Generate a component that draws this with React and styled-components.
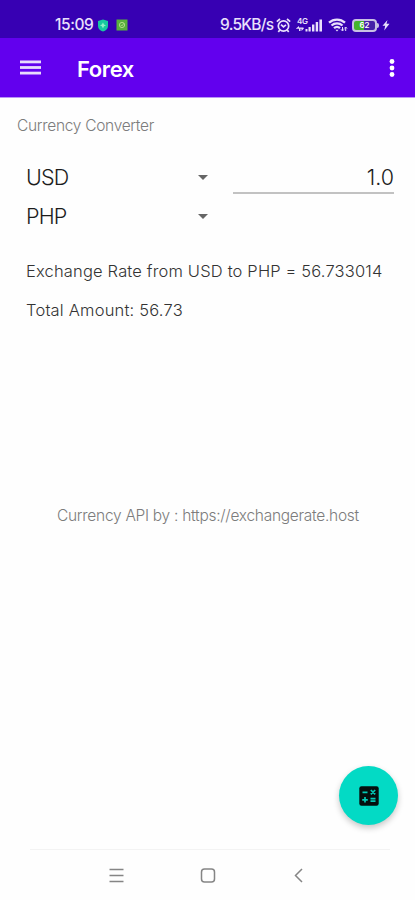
import React, { useState } from 'react';
import styled, { createGlobalStyle } from 'styled-components';

const GlobalStyle = createGlobalStyle`
  * {
    box-sizing: border-box;
  }

  body {
    margin: 0;
    background: #fefefe;
    font-family: Inter, 'Noto Sans', sans-serif;
  }

  svg {
    display: block;
    flex: none;
  }
`;

const Screen = styled.div`
  display: flex;
  flex-direction: column;
  width: 415px;
  height: 900px;
  overflow: hidden;
  background: #fefefe;
`;

const StatusBar = styled.div`
  display: flex;
  align-items: center;
  height: 38px;
  padding: 12px 25px 0 55px;
  background: #3700b3;
  color: #e9e0fb;
`;

const StatusText = styled.span`
  width: ${(props) => props.$width}px;
  font-size: 15.5px;
  font-weight: 500;
  line-height: 20px;
  letter-spacing: ${(props) => props.$spacing}px;
  white-space: nowrap;
`;

const StatusGroup = styled.div`
  display: flex;
  align-items: center;
  gap: ${(props) => props.$gap || 0}px;
`;

const StatusEnd = styled(StatusGroup)`
  margin-left: auto;
`;

const AppBar = styled.header`
  display: flex;
  align-items: center;
  height: 60px;
  padding: 1px 19px 0 20px;
  border-bottom: 1px solid #b794f6;
  background: #6200ee;
  color: #fff;
`;

const IconButton = styled.button`
  display: flex;
  padding: 0;
  border: 0;
  background: none;
  color: inherit;
`;

const Title = styled.h1`
  flex: 1;
  margin: 1px 0 0 36px;
  font-size: 22px;
  font-weight: 600;
  line-height: 30px;
  letter-spacing: -0.4px;
`;

const Content = styled.main`
  display: flex;
  flex: 1;
  flex-direction: column;
  padding: 18px 21px 0 17px;
`;

const Caption = styled.div`
  color: #7c7c7c;
  font-size: 15.5px;
  font-weight: 300;
  line-height: 20px;
  letter-spacing: ${(props) => props.$spacing}px;
  white-space: nowrap;
`;

const Form = styled.div`
  display: grid;
  grid-template-columns: 184px 161px;
  grid-template-rows: 39px 39px;
  column-gap: 23px;
  margin: 22px 0 0 9px;
`;

const Spinner = styled.div`
  display: flex;
  align-items: center;
  justify-content: space-between;
  grid-column: 1;
  color: #1c1c1c;
  font-size: 21.5px;
  font-weight: 300;
  line-height: 39px;
  letter-spacing: -0.8px;
`;

const Caret = styled.i`
  margin-right: 2px;
  border: 5px solid transparent;
  border-top: 5px solid #666;
  border-bottom: 0;
`;

const AmountInput = styled.input`
  grid-column: 2;
  grid-row: 1;
  width: 100%;
  height: 36px;
  padding: 3px 0 0;
  border: 0;
  border-bottom: 2px solid #c2c2c2;
  outline: 0;
  background: none;
  color: #1c1c1c;
  font-family: inherit;
  font-size: 21.5px;
  font-weight: 300;
  text-align: right;
`;

const Results = styled.div`
  display: flex;
  flex-direction: column;
  margin: 16px 0 0 9px;
`;

const Result = styled.div`
  color: #333;
  font-size: 16.5px;
  font-weight: 300;
  line-height: 39px;
  letter-spacing: ${(props) => props.$spacing}px;
  white-space: nowrap;
`;

const Credit = styled.div`
  margin: 176px 0 0 40px;
`;

const Fab = styled.button`
  display: flex;
  align-items: center;
  justify-content: center;
  align-self: flex-end;
  width: 59px;
  height: 59px;
  margin: auto -4px 24px 0;
  padding: 0;
  border: 0;
  border-radius: 50%;
  background: #03dac5;
  box-shadow: 0 3px 6px rgba(0, 0, 0, 0.22);
`;

const NavBar = styled.nav`
  display: flex;
  align-items: center;
  justify-content: space-between;
  height: 51px;
  margin: 0 25px 0 30px;
  padding: 2px 87px 0 79px;
  border-top: 1px solid #f3f3f3;
  color: #858585;
`;

const ShieldIcon = () => (
  <svg width="12" height="13" viewBox="0 0 12 13">
    <path d="M6 .5 11 2v5c0 2.800-2.200 4.600-5 5.600C3.200 11.600 1 9.800 1 7V2z" fill="#18c9a0" />
    <path d="M6 3.500 7 5.500 9 6.500 7 7.300 6 9.500 4.800 7.300 3 6.500 4.800 5.500z" fill="#8df0c6" />
  </svg>
);

const AppBadgeIcon = () => (
  <svg width="12" height="12" viewBox="0 0 12 12">
    <rect x=".5" y=".5" width="11" height="11" fill="#58b13d" />
    <circle cx="6" cy="6" r="2.600" fill="none" stroke="#b4dc8c" />
    <path d="m4.800 6 1 1 2.400-3" fill="none" stroke="#b4dc8c" strokeWidth=".8" />
  </svg>
);

const AlarmIcon = () => (
  <svg width="15" height="15" viewBox="0 0 15 15" fill="none" stroke="currentColor" strokeWidth="1.700">
    <circle cx="7.500" cy="8" r="5.200" />
    <path d="M.8 3.600 4 1M14.200 3.600 11 1M5 6.600l2.500 2.200L10 6.800" />
    <path d="m3.800 12-1.500 2M11.200 12l1.500 2" />
  </svg>
);

const Network = styled.div`
  position: relative;
`;

const NetworkType = styled.span`
  position: absolute;
  top: -1px;
  left: 1px;
  font-size: 8px;
  font-weight: 600;
  line-height: 8px;
  letter-spacing: -0.4px;
`;

const SignalIcon = () => (
  <svg width="27" height="14" viewBox="0 0 27 14" fill="currentColor">
    <path d="M0 10.500 3 8v1.600h4.500v1.200H4.500V13H3v-2.200H0zM8 10.200 5.500 13v-2.500z" />
    <rect x="9.500" y="11" width="2" height="2.500" />
    <rect x="12.500" y="9" width="2.200" height="4.500" />
    <rect x="16" y="6.500" width="2.400" height="7" />
    <rect x="19.700" y="4" width="2.400" height="9.500" />
    <rect x="23.400" y="1.500" width="2.600" height="12" />
  </svg>
);

const WifiIcon = () => (
  <svg width="20" height="14" viewBox="0 0 20 14" fill="none" stroke="currentColor" strokeWidth="2.300">
    <path d="M1 4.700a12 12 0 0 1 16 0M3.500 7.500a8.200 8.200 0 0 1 11 0M6 10.200a4.500 4.500 0 0 1 6 0" />
    <path d="M9 13.500 7.500 11.700h3z" fill="currentColor" stroke="none" />
    <path d="M14.500 9v3.500M13 11.300l1.500 1.700 1.500-1.700M17.700 13V9.500M16.200 10.500l1.500-1.500 1.300 1.500" strokeWidth="1" />
  </svg>
);

const Battery = styled.div`
  display: flex;
  align-items: center;
  justify-content: center;
  position: relative;
  width: 25px;
  height: 13px;
  margin-left: -1px;
  border: 2px solid #c8bfe4;
  border-radius: 4px;
  background: linear-gradient(90deg, #45b52c 50%, #4520a8 50%);
  color: #fff;
  font-size: 8px;
  font-weight: 600;
  line-height: 9px;

  &::after {
    content: '';
    position: absolute;
    right: -4px;
    width: 2px;
    height: 5px;
    border-radius: 0 2px 2px 0;
    background: #c8bfe4;
  }
`;

const BoltIcon = () => (
  <svg width="8" height="12" viewBox="0 0 8 12">
    <path d="M5.500 1 .5 6.800h2.700L2.200 11.500l5.300-6.700H4.500z" fill="currentColor" />
  </svg>
);

const MenuIcon = () => (
  <svg width="21" height="16" viewBox="0 0 21 16" fill="#e8dafc">
    <rect y=".5" width="21" height="2.800" />
    <rect y="6.100" width="21" height="2.800" />
    <rect y="11.700" width="21" height="2.800" />
  </svg>
);

const MoreIcon = () => (
  <svg width="8" height="20" viewBox="0 0 8 20" fill="currentColor">
    <circle cx="4" cy="3.500" r="2.400" />
    <circle cx="4" cy="10" r="2.400" />
    <circle cx="4" cy="16.500" r="2.400" />
  </svg>
);

const CalculatorIcon = () => (
  <svg width="20" height="20" viewBox="0 0 20 20">
    <rect x=".3" y=".3" width="19.400" height="19.400" rx="2.200" fill="#050f0e" />
    <g stroke="#03c9b6" strokeWidth="1.700" fill="none">
      <path d="M3.500 6.300h5M3.200 13.800h5.600M6 11v5.600M11.500 12.700h5M11.500 15.200h5M11.800 4l4.400 4.400M16.200 4l-4.400 4.400" />
    </g>
  </svg>
);

const RecentsIcon = () => (
  <svg width="15" height="16" viewBox="0 0 15 16" fill="none" stroke="currentColor" strokeWidth="1.500">
    <path d="M.5 1.500h14M.5 7.500h14M.5 13.500h14" />
  </svg>
);

const HomeIcon = () => (
  <svg width="16" height="16" viewBox="0 0 16 16" fill="none" stroke="currentColor" strokeWidth="1.500">
    <rect x="1.500" y="1" width="13" height="13" rx="3" />
  </svg>
);

const BackIcon = () => (
  <svg width="12" height="16" viewBox="-3 0 12 16" fill="none" stroke="currentColor" strokeWidth="1.500">
    <path d="M8 1 1.500 7.500 8 14" />
  </svg>
);

const App = () => {
  const [amount, setAmount] = useState('1.0');

  return (
    <>
      <GlobalStyle />
      <Screen>
        <StatusBar>
          <StatusGroup $gap={4}>
            <StatusText $width={38} $spacing={-0.4}>15:09</StatusText>
            <StatusGroup $gap={7}>
              <ShieldIcon />
              <AppBadgeIcon />
            </StatusGroup>
          </StatusGroup>
          <StatusEnd>
            <StatusText $width={56} $spacing={-0.7}>9.5KB/s</StatusText>
            <StatusGroup $gap={5}>
              <AlarmIcon />
              <Network>
                <NetworkType>4G</NetworkType>
                <SignalIcon />
              </Network>
              <WifiIcon />
              <Battery>62</Battery>
              <BoltIcon />
            </StatusGroup>
          </StatusEnd>
        </StatusBar>

        <AppBar>
          <IconButton aria-label="Menu">
            <MenuIcon />
          </IconButton>
          <Title>Forex</Title>
          <IconButton aria-label="More">
            <MoreIcon />
          </IconButton>
        </AppBar>

        <Content>
          <Caption $spacing={-0.3}>Currency Converter</Caption>

          <Form>
            <Spinner>
              USD
              <Caret />
            </Spinner>
            <AmountInput value={amount} onChange={(e) => setAmount(e.target.value)} />
            <Spinner>
              PHP
              <Caret />
            </Spinner>
          </Form>

          <Results>
            <Result $spacing={0.17}>Exchange Rate from USD to PHP = 56.733014</Result>
            <Result $spacing={0.2}>Total Amount: 56.73</Result>
          </Results>

          <Credit>
            <Caption $spacing={-0.28}>Currency API by : https://exchangerate.host</Caption>
          </Credit>

          <Fab aria-label="Calculate">
            <CalculatorIcon />
          </Fab>
        </Content>

        <NavBar>
          <RecentsIcon />
          <HomeIcon />
          <BackIcon />
        </NavBar>
      </Screen>
    </>
  );
};

export default App;
